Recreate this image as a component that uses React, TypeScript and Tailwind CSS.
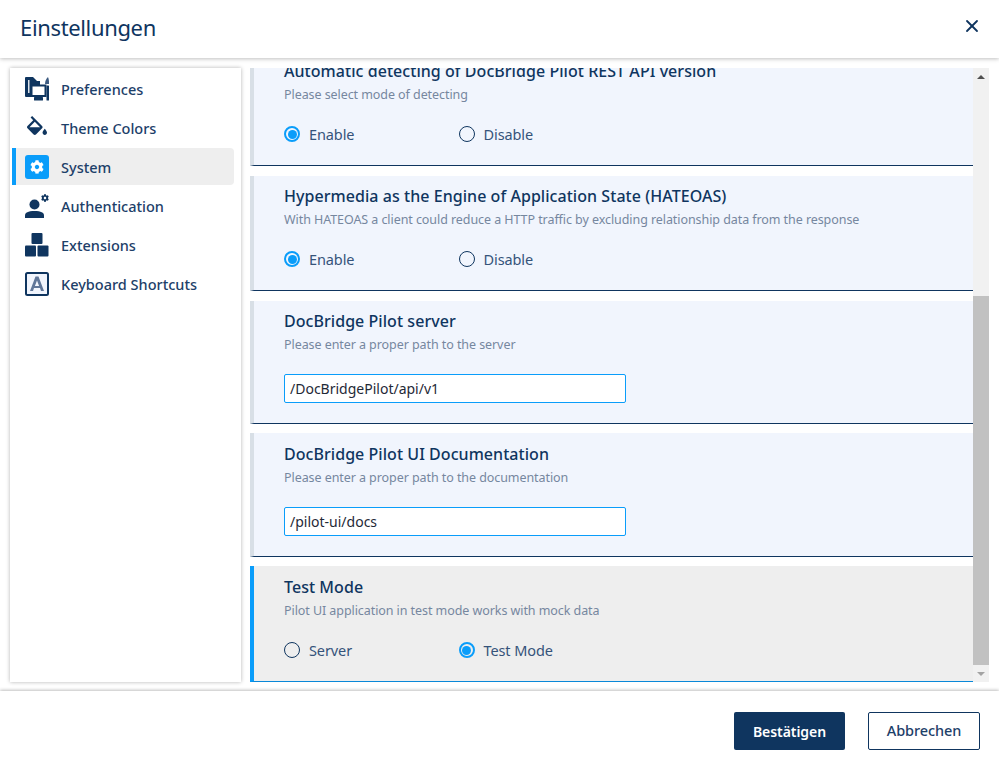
import { X } from 'lucide-react';
import { FaCog } from 'react-icons/fa';

const font = "font-['Noto_Sans',sans-serif]";

function PreferencesIcon() {
  return (
    <svg viewBox="0 0 24 24" className="w-6 h-6" fill="#0f355f">
      <path d="M1 0h7l4 4h3v4H8v10h3v2H1a1 1 0 0 1-1-1V1a1 1 0 0 1 1-1z" />
      <rect x="3" y="3" width="1.500" height="13" fill="#dfe5ec" />
      <rect x="6.500" y="8.500" width="14" height="10.500" fill="#fff" stroke="#0f355f" strokeWidth="2" />
      <rect x="9" y="20" width="9" height="3.500" rx="0.500" />
      <rect x="21.500" y="8.500" width="2.500" height="15" rx="0.500" />
      <path d="M20 7c0-3 1-5 3-7 1 2 1 5 1 7z" fill="#3c5a80" />
    </svg>
  );
}

function BucketIcon() {
  return (
    <svg viewBox="3 0 18 17" width="20" height="19" fill="#0f355f" className="mb-[4px]">
      <path d="M16.560 8.940L7.620 0 6.210 1.410l2.380 2.380-5.150 5.150c-.59.590-.59 1.540 0 2.120l5.500 5.500c.290.290.680.440 1.060.440s.770-.150 1.060-.440l5.500-5.500c.590-.580.590-1.530 0-2.120zM5.210 10L10 5.210 14.790 10H5.210zM19 11.500s-2 2.170-2 3.500c0 1.100.900 2 2 2s2-.900 2-2c0-1.330-2-3.500-2-3.500z" />
    </svg>
  );
}

function SystemIcon() {
  return (
    <span className="w-6 h-6 rounded-[3px] bg-[#0a9dfa] flex items-center justify-center">
      <FaCog className="w-[14px] h-[14px] text-white" />
    </span>
  );
}

function AuthIcon() {
  return (
    <span className="relative w-6 h-6 block">
      <svg viewBox="0 0 24 24" className="w-6 h-6" fill="#0f355f">
        <circle cx="9.500" cy="10.500" r="5" />
        <path d="M0 21.500c0-3 3-4.500 9.500-4.500s9.500 1.500 9.500 4.500V24H0z" />
      </svg>
      <FaCog className="absolute right-0 top-0 w-2 h-2 text-[#0f355f]" />
    </span>
  );
}

function ExtensionsIcon() {
  return (
    <svg viewBox="0 0 24 24" className="w-6 h-6" fill="#0f355f">
      <rect x="6.500" y="0" width="11" height="11" rx="1" />
      <rect x="0" y="12.500" width="11" height="11" rx="1" />
      <rect x="12.500" y="12.500" width="11" height="11" rx="1" />
    </svg>
  );
}

function KeyboardIcon() {
  return (
    <svg viewBox="0 0 24 24" className="w-6 h-6">
      <rect x="1" y="1" width="22" height="22" rx="1.500" fill="#f1f5fd" stroke="#0f355f" strokeWidth="2" />
      <path d="M10.500 4.500h3L19 19h-3l-1-3H9l-1 3H5zM12 8.500L9.900 14h4.200z" fill="#5f7699" fillRule="evenodd" />
    </svg>
  );
}

const navItems = [
  { label: 'Preferences', icon: <PreferencesIcon /> },
  { label: 'Theme Colors', icon: <BucketIcon /> },
  { label: 'System', icon: <SystemIcon />, active: true },
  { label: 'Authentication', icon: <AuthIcon /> },
  { label: 'Extensions', icon: <ExtensionsIcon /> },
  { label: 'Keyboard Shortcuts', icon: <KeyboardIcon /> },
];

function Radio({ label, checked }: { label: string; checked?: boolean }) {
  return (
    <div className="w-[174.500px] flex items-center gap-[9px]">
      {checked ? (
        <span className="w-4 h-4 rounded-full border-2 border-[#0a9dfa] flex items-center justify-center">
          <span className="w-[9px] h-[9px] rounded-full bg-[#0a9dfa]" />
        </span>
      ) : (
        <span className="w-4 h-4 rounded-full border-[1.500px] border-[#0f355f]" />
      )}
      <span className="text-[14.500px] leading-5 text-[#35537a] tracking-[-0.1px]">{label}</span>
    </div>
  );
}

function Card({
  title,
  desc,
  height,
  active,
  children,
}: {
  title: string;
  desc: string;
  height: string;
  active?: boolean;
  children: React.ReactNode;
}) {
  return (
    <section
      className={`${height} shrink-0 pl-[30px] border-l-4 border-b ${
        active ? 'bg-[#eeeeee] border-l-[#0a9dfa] border-b-[#0a88d8]' : 'bg-[#f1f5fd] border-l-[#d8dfe6] border-b-[#0f355f]'
      }`}
    >
      <h3 className="pt-[9px] text-[16px] leading-[22px] font-medium text-[#0f355f] tracking-[0.05px]">{title}</h3>
      <p className="mt-[4px] text-[12.500px] leading-[18px] text-[#76879f] tracking-[-0.07px]">{desc}</p>
      {children}
    </section>
  );
}

function RadioRow({ a, b, second }: { a: string; b: string; second?: boolean }) {
  return (
    <div className="flex mt-[20px]">
      <Radio label={a} checked={!second} />
      <Radio label={b} checked={second} />
    </div>
  );
}

function PathInput({ value }: { value: string }) {
  return (
    <div className="mt-[20px] w-[342px] h-[29px] bg-white border border-[#0a9dfa] rounded-[2px] flex items-center px-[5px] text-[14px] text-[#1f2937]">
      {value}
    </div>
  );
}

export default function App() {
  return (
    <div className={`${font} w-[999px] h-[765px] bg-white flex flex-col overflow-hidden`}>
      {/* Header */}
      <header className="h-[58px] shrink-0 flex items-center justify-between pl-5 pr-[17px] pb-1 bg-white shadow-[0_1px_4px_rgba(0,0,0,0.25)] z-10">
        <h1 className="text-[22px] text-[#0f355f] tracking-[-0.35px]">Einstellungen</h1>
        <X className="w-5 h-5 mb-[3px] text-[#0f355f]" strokeWidth={2.200} />
      </header>

      {/* Body */}
      <div className="h-[633px] shrink-0 flex pt-[10px] pb-[9px] pl-[10px] pr-[10px]">
        <nav className="w-[231px] shrink-0 bg-white shadow-[0_0_4px_rgba(0,0,0,0.3)] pt-[2px]">
          <ul className="flex flex-col gap-[2px]">
            {navItems.map((item) => (
              <li key={item.label} className="h-[37px] flex items-center pl-[15px] relative">
                {item.active && (
                  <>
                    <span className="absolute left-[2px] top-0 bottom-0 w-1 bg-[#0a9dfa]" />
                    <span className="absolute left-[6px] right-[7px] top-0 bottom-0 bg-[#eeeeee] rounded-r-[4px]" />
                  </>
                )}
                <span className="relative w-6 h-6 flex items-center justify-center">{item.icon}</span>
                <span className="relative ml-3 pt-[2px] text-[14.500px] font-medium text-[#1d4069]">{item.label}</span>
              </li>
            ))}
          </ul>
        </nav>

        <div className="ml-[9px] w-[723px] shrink-0 overflow-hidden">
          <div className="flex flex-col gap-[10px] -mt-[17px]">
            <Card title="Automatic detecting of DocBridge Pilot REST API version" desc="Please select mode of detecting" height="h-[115px]">
              <RadioRow a="Enable" b="Disable" />
            </Card>
            <Card
              title="Hypermedia as the Engine of Application State (HATEOAS)"
              desc="With HATEOAS a client could reduce a HTTP traffic by excluding relationship data from the response"
              height="h-[115px]"
            >
              <RadioRow a="Enable" b="Disable" />
            </Card>
            <Card title="DocBridge Pilot server" desc="Please enter a proper path to the server" height="h-[123px]">
              <PathInput value="/DocBridgePilot/api/v1" />
            </Card>
            <Card title="DocBridge Pilot UI Documentation" desc="Please enter a proper path to the documentation" height="h-[124px] -mt-px pt-px">
              <PathInput value="/pilot-ui/docs" />
            </Card>
            <Card title="Test Mode" desc="Pilot UI application in test mode works with mock data" height="h-[116px] -mt-px pt-px" active>
              <RadioRow a="Server" b="Test Mode" second />
            </Card>
          </div>
        </div>

        {/* Scrollbar */}
        <div className="w-4 shrink-0 bg-[#f1f1f1] flex flex-col items-center">
          <div className="h-[17px] shrink-0 flex items-center justify-center">
            <span className="w-0 h-0 border-x-[4px] border-x-transparent border-b-[4px] border-b-[#505050]" />
          </div>
          <div className="h-[211px] shrink-0" />
          <div className="w-full flex-1 bg-[#c1c1c1]" />
          <div className="h-[17px] shrink-0 flex items-center justify-center">
            <span className="w-0 h-0 border-x-[4px] border-x-transparent border-t-[4px] border-t-[#a3a3a3]" />
          </div>
        </div>
      </div>

      {/* Footer */}
      <footer className="flex-1 flex items-start justify-end gap-[23px] pt-[21px] pr-[19px] bg-white shadow-[0_-1px_3px_rgba(0,0,0,0.25)] z-10">
        <button className="w-[111px] h-[38px] bg-[#0f355f] rounded-[2px] text-white text-[14px] font-semibold tracking-[-0.05px]">Bestätigen</button>
        <button className="w-[112px] h-[38px] bg-white border border-[#0f355f] rounded-[2px] text-[#1d4069] text-[14.500px] font-medium tracking-[-0.1px]">Abbrechen</button>
      </footer>
    </div>
  );
}
